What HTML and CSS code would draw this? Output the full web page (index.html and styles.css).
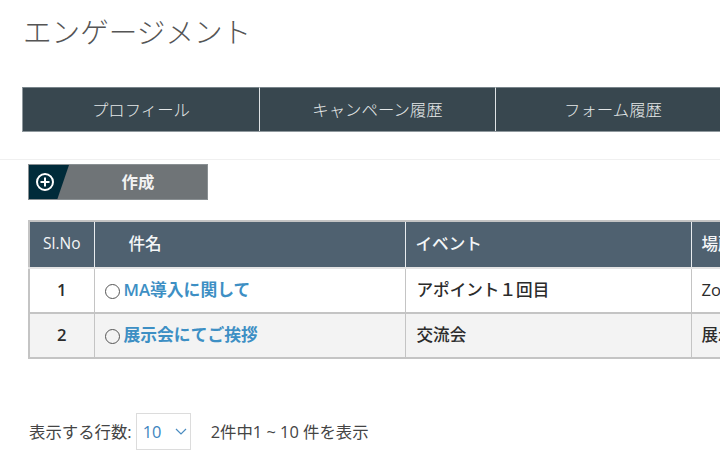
FILE: index.html
```html
<!doctype html>
<html lang="ja">
	<head>
	<meta charset="utf-8">
	<title>エンゲージメント</title>
	<link rel="stylesheet" href="styles.css">
	</head>
	<body>

		<h1 class="page-title">エンゲージメント</h1>

		<nav class="tabs">
			<a class="tab">プロフィール</a>
			<a class="tab">キャンペーン履歴</a>
			<a class="tab">フォーム履歴</a>
		</nav>

		<section class="content">
			<a class="create-btn">
				<span class="create-icon">
					<svg width="20" height="20" viewBox="0 0 20 20" fill="none" stroke="#fff" stroke-width="2"><circle cx="10" cy="10" r="8"/><path d="M10 5.5v9M5.5 10h9"/></svg>
				</span>
				<span class="create-label">作成</span>
			</a>

			<table class="list">
				<thead>
					<tr>
						<th class="col-no">Sl.No</th>
						<th class="col-name">件名</th>
						<th class="col-event">イベント</th>
						<th class="col-place">場所</th>
					</tr>
				</thead>
				<tbody>
					<tr>
						<td class="num">1</td>
						<td class="name"><span class="radio"></span><a class="link">MA導入に関して</a></td>
						<td>アポイント１回目</td>
						<td class="place">Zoom</td>
					</tr>
					<tr>
						<td class="num">2</td>
						<td class="name"><span class="radio"></span><a class="link">展示会にてご挨拶</a></td>
						<td>交流会</td>
						<td class="place">展示会</td>
					</tr>
				</tbody>
			</table>

			<div class="pager">
				<span>表示する行数:</span>
				<div class="select">
					<span>10</span>
					<svg width="12" height="7" viewBox="0 0 12 7" fill="none" stroke="#4a8cc0" stroke-width="1.2"><path d="M1 1l5 5 5-5"/></svg>
				</div>
				<span class="pager-info">2件中1 ~ 10 件を表示</span>
			</div>
		</section>

	</body>
</html>
```

FILE: styles.css
```css
html, body {
	overflow: hidden;
}

body {
	margin: 0;
	width: 720px;
	height: 456px;
	background-color: white;
	font-family: "Open Sans", "Noto Sans CJK JP", sans-serif;
	color: #333;
}

.page-title {
	margin: 0;
	padding: 13px 0 0 23px;
	height: 87px;
	box-sizing: border-box;
	font-size: 28.6px;
	font-weight: 300;
	line-height: 38px;
	color: #555;
}

.tabs {
	display: flex;
	margin-left: 22px;
	width: 760px;
	height: 45px;
	border-bottom: 1px solid #8f989d;
	box-sizing: border-box;
}

.tab {
	display: flex;
	flex: none;
	align-items: center;
	justify-content: center;
	width: 237px;
	padding-bottom: 2px;
	background-color: #38474f;
	border-top: 1px solid #78848a;
	border-left: 1px solid #8f989d;
	box-sizing: border-box;
	font-size: 16.4px;
	font-weight: 300;
	color: #e4e7e8;
}

.tab + .tab {
	border-left: 1px solid #dfe3e5;
	width: 236px;
}

.tab:last-child {
	flex: 1;
	padding-right: 52px;
}

.content {
	margin-top: 27px;
	padding: 4px 0 0 28px;
	border-top: 1px solid #f0f0f0;
}

.create-btn {
	display: flex;
	width: 180px;
	height: 36px;
	background-color: #6f7477;
	border: 1px solid #8a9093;
	box-sizing: border-box;
}

.create-icon {
	display: flex;
	align-items: center;
	width: 40px;
	padding-left: 6px;
	box-sizing: border-box;
	background-color: #002b3a;
	clip-path: polygon(0 0, 100% 0, 71% 100%, 0 100%);
}

.create-label {
	width: 100px;
	line-height: 34px;
	text-align: center;
	font-size: 16.4px;
	font-weight: 700;
	color: #f2f2f2;
	margin-left: 19px;
}

.list {
	margin-top: 20px;
	table-layout: fixed;
	width: 900px;
	border-collapse: collapse;
	border: 2px solid #c4c4c4;
	font-size: 16.6px;
}

.list th {
	box-sizing: border-box;
	height: 47px;
	padding: 0 0 3px 10px;
	background-color: #4f6170;
	border-right: 1px solid #e8ecef;
	border-bottom: 2px solid #e4e4e4;
	text-align: left;
	font-weight: 500;
	color: #f4f6f7;
}

.list th.col-no {
	padding: 0 0 3px 0;
	text-align: center;
	font-size: 15.5px;
	font-weight: 500;
}

.list th.col-name {
	padding-left: 34px;
}

.col-no { width: 65px; }
.col-name { width: 311px; }
.col-event { width: 286px; }
.col-place { width: 238px; }

.list td {
	box-sizing: border-box;
	height: 45px;
	padding: 0 0 3px 11px;
	border-right: 1px solid #c4c4c4;
	border-bottom: 2px solid #c4c4c4;
	font-weight: 500;
	color: #2b2b2b;
}

.list td.num {
	padding: 0 0 3px 0;
	text-align: center;
	font-weight: 600;
}

.list td.name {
	padding-left: 10px;
}

.list td.place {
	padding-left: 10px;
}

.list tbody tr:nth-child(2) {
	background-color: #f3f3f3;
}

.radio {
	display: inline-block;
	vertical-align: -3px;
	width: 15px;
	height: 15px;
	margin-right: 4px;
	border: 1px solid #555;
	border-radius: 50%;
	box-sizing: border-box;
}

.link {
	font-size: 16.8px;
	font-weight: 600;
	color: #3d8fc4;
}

.pager {
	display: flex;
	align-items: center;
	margin-top: 54px;
	margin-left: 1px;
	font-size: 16.4px;
	color: #444;
}

.pager > span:first-child {
	margin-bottom: 2px;
}

.pager-info {
	margin-bottom: 2px;
	margin-left: 20px;
}

.select {
	display: flex;
	align-items: center;
	justify-content: space-between;
	width: 55px;
	height: 37px;
	margin-left: 4px;
	padding: 0 3px 0 6px;
	border: 1px solid #dcdcdc;
	box-sizing: border-box;
	color: #3d85c0;
}
```
